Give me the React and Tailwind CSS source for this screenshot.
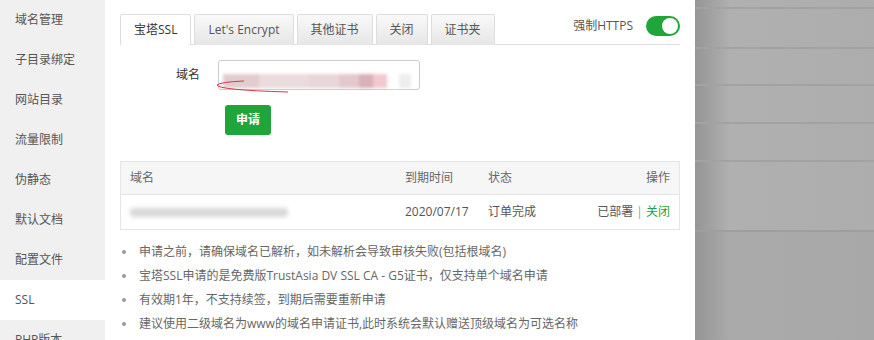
import { useState } from 'react';

const menu = ['域名管理', '子目录绑定', '网站目录', '流量限制', '伪静态', '默认文档', '配置文件', 'SSL', 'PHP版本'];
const tabs = ['宝塔SSL', "Let's Encrypt", '其他证书', '关闭', '证书夹'];
const tips = [
  '申请之前，请确保域名已解析，如未解析会导致审核失败(包括根域名)',
  '宝塔SSL申请的是免费版TrustAsia DV SSL CA - G5证书，仅支持单个域名申请',
  '有效期1年，不支持续签，到期后需要重新申请',
  '建议使用二级域名为www的域名申请证书,此时系统会默认赠送顶级域名为可选名称',
];

export default function App() {
  const [activeTab, setActiveTab] = useState(0);
  const [forceHttps, setForceHttps] = useState(true);

  return (
    <div className="flex h-[340px] w-[874px] overflow-hidden font-['Open_Sans','Noto_Sans_CJK_SC',sans-serif] text-[12px] text-[#555]">
      {/* Sidebar */}
      <aside className="w-[105px] shrink-0 bg-[#f0f0f0]">
        {menu.map((item) => (
          <div
            key={item}
            className={`flex h-10 items-center pl-[15px] ${item === 'SSL' ? 'bg-white' : ''}`}
          >
            {item}
          </div>
        ))}
      </aside>

      {/* Main panel */}
      <main className="w-[590px] shrink-0 bg-white px-[15px] pt-[14px]">
        <div className="flex h-[31px] items-stretch justify-between border-b border-[#ddd]">
          <div className="flex gap-[3px]">
            {tabs.map((tab, i) => (
              <button
                key={tab}
                onClick={() => setActiveTab(i)}
                className={`-mb-px flex items-center rounded-t-[2px] border border-b-0 border-[#ddd] px-[13px] ${
                  activeTab === i
                    ? 'bg-white text-[#333]'
                    : 'bg-[linear-gradient(#f9f9f9,#e6e6e6)] text-[#555]'
                }`}
              >
                {tab}
              </button>
            ))}
          </div>
          <div className="flex items-center gap-[13px] pb-[7px]">
            <span className="text-[#555]">强制HTTPS</span>
            <button
              onClick={() => setForceHttps(!forceHttps)}
              className={`flex h-[20px] w-[34px] items-center rounded-full p-[2px] ${
                forceHttps ? 'justify-end bg-[#20a53a]' : 'justify-start bg-[#ccc]'
              }`}
            >
              <span className="h-[16px] w-[16px] rounded-full bg-white" />
            </button>
          </div>
        </div>

        {/* Domain form */}
        <div className="mt-[15px] flex items-center">
          <label className="w-[80px] text-right text-[#333]">域名</label>
          <div className="relative ml-[18px] h-[30px] w-[202px] rounded-[3px] border border-[#ccc] bg-white">
            <div className="absolute left-[4px] top-[13px] flex h-[14px] blur-[1.5px]">
              <span className="w-[36px] bg-[#e2ccd0]" />
              <span className="w-[50px] bg-[#eadbde]" />
              <span className="w-[30px] bg-[#e8d6da]" />
              <span className="w-[20px] bg-[#e3c9ce]" />
              <span className="w-[14px] bg-[#d9b1b8]" />
              <span className="w-[14px] bg-[#f1c9cf]" />
              <span className="w-[12px] bg-white" />
              <span className="w-[12px] bg-[#eeeeee]" />
            </div>
            <svg className="absolute -left-[3px] top-[17px]" width="90" height="18" viewBox="0 0 90 18">
              <path d="M28 3 Q4 4 1 7 Q2 12 72 14" fill="none" stroke="#d6394a" strokeWidth="1" />
            </svg>
          </div>
        </div>

        <button className="ml-[105px] mt-[15px] h-[30px] w-[46px] rounded-[3px] bg-[#20a53a] font-bold text-white">
          申请
        </button>

        {/* Certificate table */}
        <div className="mt-[26px] border border-[#e5e5e5]">
          <div className="flex h-[33px] items-center border-b border-[#e5e5e5] bg-[#f6f6f6] px-[9px] text-[#666]">
            <span className="w-[275px]">域名</span>
            <span className="w-[83px]">到期时间</span>
            <span className="flex-1">状态</span>
            <span>操作</span>
          </div>
          <div className="flex h-[34px] items-center px-[9px] text-[#555]">
            <span className="w-[275px]">
              <span className="block h-[9px] w-[158px] rounded bg-[#d8d8d8] blur-[2px]" />
            </span>
            <span className="w-[83px]">2020/07/17</span>
            <span className="flex-1">订单完成</span>
            <span>
              已部署 <span className="text-[#999]">|</span> <span className="text-[#20a53a]">关闭</span>
            </span>
          </div>
        </div>

        {/* Tips */}
        <ul className="mt-[13px] space-y-[6px] text-[#666]">
          {tips.map((tip) => (
            <li key={tip} className="flex h-[18px] items-center">
              <span className="ml-[2px] mr-[13px] h-[4px] w-[4px] rounded-full bg-[#999]" />
              {tip}
            </li>
          ))}
        </ul>
      </main>

      {/* Dimmed page behind */}
      <div className="flex flex-1 flex-col bg-[linear-gradient(to_right,#959595,#b0b0b0_35px,#adadad)]">
        <div className="h-[9px] shrink-0 border-b-2 border-[#a2a2a2]" />
        <div className="h-[40px] shrink-0 border-b-2 border-[#a2a2a2]" />
        <div className="h-[37px] shrink-0 border-b-2 border-[#a2a2a2]" />
        <div className="h-[38px] shrink-0 border-b-2 border-[#a2a2a2]" />
        <div className="h-[38px] shrink-0 border-b-2 border-[#a2a2a2]" />
        <div className="h-[70px] shrink-0 border-b-2 border-[#9e9e9e]" />
        <div className="flex-1 bg-[linear-gradient(to_right,#959595,#aaaaaa_35px,#a8a8a8)]" />
      </div>
    </div>
  );
}
